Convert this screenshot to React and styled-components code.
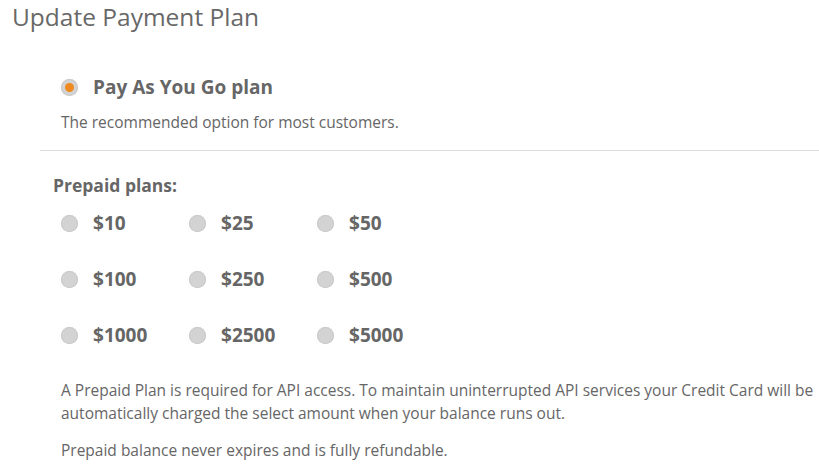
import styled, { createGlobalStyle } from 'styled-components';

const GlobalStyle = createGlobalStyle`
  body {
    margin: 0;
    background: #fff;
    font-family: 'Open Sans', 'Noto Sans', sans-serif;
    color: #666;
  }
`;

const Page = styled.div`
  padding: 0 0 0 12px;
`;

const Title = styled.h2`
  margin: 0;
  font-size: 24.5px;
  font-weight: 400;
  line-height: 33px;
  color: #686868;
`;

const Section = styled.div`
  margin-left: 28px;
`;

const PayBlock = styled.div`
  padding: 40px 0 16px 21px;
  border-bottom: 1px solid #dcdcdc;
`;

const OptionRow = styled.label`
  display: flex;
  align-items: center;
  gap: 15px;
  height: 28px;
  font-weight: 700;
  font-size: 19px;
  color: #666;
  cursor: pointer;
`;

const Radio = styled.span`
  position: relative;
  width: 17px;
  height: 17px;
  border-radius: 50%;
  background: #d3d3d3;
  box-shadow: inset 0 0 0 1px #cacaca;
  flex: none;

  &:after {
    content: '';
    display: ${(p) => (p.checked ? 'block' : 'none')};
    position: absolute;
    top: 4px;
    left: 4px;
    width: 9px;
    height: 9px;
    border-radius: 50%;
    background: #ee8a1f;
  }
`;

const Note = styled.p`
  margin: 10px 0 0;
  font-size: 15.5px;
  line-height: 23px;
  color: #666;
`;

const Prepaid = styled.div`
  padding: 22px 0 0 13px;
`;

const Label = styled.div`
  font-size: 17.5px;
  font-weight: 700;
  line-height: 24px;
  color: #666;
`;

const Grid = styled.div`
  display: grid;
  grid-template-columns: repeat(3, 128px);
  grid-auto-rows: 56px;
  margin-top: 12px;
  padding-left: 8px;
  align-items: start;
`;

const Footer = styled.div`
  padding: 2px 4px 0 21px;
`;

const Text = styled.p`
  margin: 0 0 14px;
  font-size: 15.5px;
  line-height: 23px;
  color: #666;
`;

const amounts = [10, 25, 50, 100, 250, 500, 1000, 2500, 5000];

export default function App() {
  return (
    <Page>
      <GlobalStyle />
      <Title>Update Payment Plan</Title>
      <Section>
        <PayBlock>
          <OptionRow>
            <Radio checked />
            Pay As You Go plan
          </OptionRow>
          <Note>The recommended option for most customers.</Note>
        </PayBlock>
        <Prepaid>
          <Label>Prepaid plans:</Label>
          <Grid>
            {amounts.map((a) => (
              <OptionRow key={a}>
                <Radio />${a}
              </OptionRow>
            ))}
          </Grid>
        </Prepaid>
        <Footer>
          <Text>
            A Prepaid Plan is required for API access. To maintain uninterrupted API services your
            Credit Card will be automatically charged the select amount when your balance runs out.
          </Text>
          <Text>Prepaid balance never expires and is fully refundable.</Text>
        </Footer>
      </Section>
    </Page>
  );
}
